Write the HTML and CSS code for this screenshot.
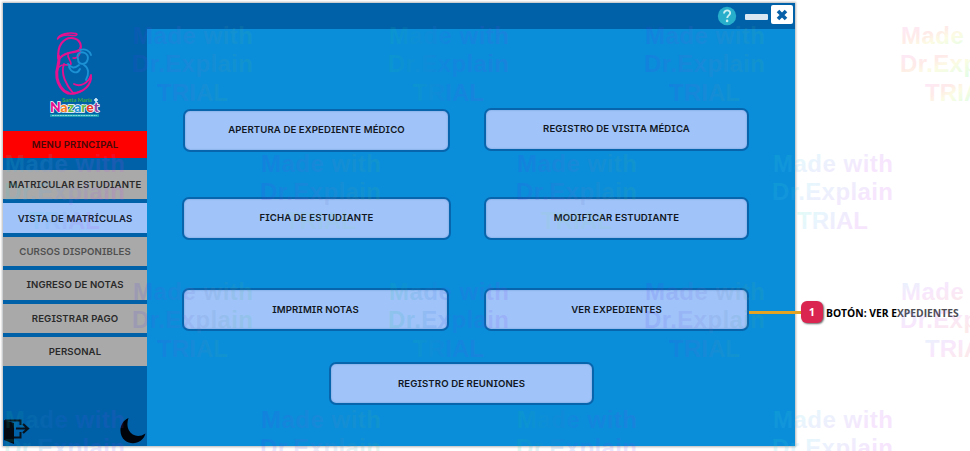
FILE: index.html
```html
<!DOCTYPE html>
<html lang="es">
<head>
<meta charset="utf-8">
<title>Menu principal</title>
<link rel="stylesheet" href="styles.css">
</head>
<body>
<div class="window">
  <header class="titlebar">
    <svg class="help" viewBox="0 0 20 20"><circle cx="10" cy="10" r="9.2" fill="#27aecb"/><path d="M7 7.6c0-4.4 6.6-4 6.1-.3-.3 2-2.9 2.3-2.9 4.8" fill="none" stroke="#c9f0f2" stroke-width="1.9"/><circle cx="10.1" cy="14.9" r="1.3" fill="#c9f0f2"/></svg>
    <span class="minimize"></span>
    <span class="close"><svg viewBox="0 0 12 12"><path d="M2 2l8 8M10 2l-8 8" stroke="#0861a8" stroke-width="3.6"/></svg></span>
  </header>
  <aside class="sidebar">
    <svg class="logo" viewBox="0 0 70 100">
      <g fill="none" stroke="#e5118f" stroke-linecap="round" stroke-linejoin="round">
        <path d="M17.500 14C19 9 29 7 36 8.500C38 9 37 11 32 10.500C26 9 20 11 17.500 14" stroke-width="1.500"/>
        <path d="M18.500 33C17 20 24 13 31 13C38 13 42 18 40.500 24C37 29 27 25 20 33" stroke-width="2.200"/>
        <path d="M40 23C41.500 28 38 34 33 33M28 28C27 34 31 35 31 39C29 42 23 37 19 42" stroke-width="1.600"/>
        <path d="M18.500 31C21 39 15 42 17 53C18 59 22 66 28 68" stroke-width="3"/>
        <path d="M24 39C20 49 27 61 33 68C43 68 52 60 51 50C48 59 40 62 34 59" stroke-width="1.900"/>
        <path d="M28 68C33 70 37 68 41 66" stroke-width="1.900"/>
      </g>
      <g fill="none" stroke="#1c91d4" stroke-width="1.900" stroke-linecap="round">
        <path d="M40 25C45 23 50 26 51 30M38 34C36 28 41 26 45 28C50 31 48 38 43 39C39 39 38 36 38 34"/>
        <path d="M28 39C32 43 34 44 39 40M29 42C31 47 37 50 40 44M44 40C49 43 49 49 46 55"/>
      </g>
      <text class="logo-top" x="22" y="77" textLength="30" lengthAdjust="spacingAndGlyphs">Santa María</text>
      <text class="logo-name" x="10" y="87" textLength="49" lengthAdjust="spacingAndGlyphs"><tspan fill="#e5118f">N</tspan><tspan fill="#f47b20">a</tspan><tspan fill="#62b946">z</tspan><tspan fill="#1c91d4">a</tspan><tspan fill="#62b946">r</tspan><tspan fill="#e5372e">e</tspan><tspan fill="#8b3fa0">t</tspan></text>
      <rect x="10" y="89.300" width="49" height="2.500" fill="#1fa9b9"/>
      <path d="M12 90.500h45" stroke="#9bdde0" stroke-width=".9" stroke-dasharray="2 .6"/>
      <path d="M54 75h4M56 73v4" stroke="#d6eefa" stroke-width="1.600"/>
    </svg>
    <nav class="menu">
      <a class="item title"><span>MENU PRINCIPAL</span></a>
      <a class="item"><span>MATRICULAR ESTUDIANTE</span></a>
      <a class="item active"><span>VISTA DE MATRÍCULAS</span></a>
      <a class="item faded"><span>CURSOS DISPONIBLES</span></a>
      <a class="item"><span>INGRESO DE NOTAS</span></a>
      <a class="item"><span>REGISTRAR PAGO</span></a>
      <a class="item"><span>PERSONAL</span></a>
    </nav>
    <div class="tools">
      <svg class="exit" viewBox="0 0 28 28"><path d="M1 3L11 6V27L1 23Z" fill="#030a12"/><path d="M2 3.500H17.500V8M17.500 15V20.500H11" fill="none" stroke="#07131e" stroke-width="2"/><path d="M13 11.500H24M20 7l5 4.500-5 4.500" fill="none" stroke="#07131e" stroke-width="2.200"/></svg>
      <svg class="moon" viewBox="0 0 26 26"><path d="M8.500 0C-1 4-2 17 5 22.500C12 28 23 25 25.500 15.500C19 20 12 18 9 12.500C7 9 7 4 8.500 0Z" fill="#000309"/></svg>
    </div>
  </aside>
  <main class="panel">
    <div class="row first"><button class="tile wide up"><span>APERTURA DE EXPEDIENTE MÉDICO</span></button><button class="tile raised up"><span>REGISTRO DE VISITA MÉDICA</span></button></div>
    <div class="row second"><button class="tile widest up"><span>FICHA DE ESTUDIANTE</span></button><button class="tile up"><span>MODIFICAR ESTUDIANTE</span></button></div>
    <div class="row third"><button class="tile wide"><span>IMPRIMIR NOTAS</span></button><button class="tile"><span>VER EXPEDIENTES</span></button></div>
    <div class="row last"><button class="tile"><span>REGISTRO DE REUNIONES</span></button></div>
  </main>
</div>
<div class="callout"><span class="leader"></span><span class="number">1</span><span class="label">BOTÓN: VER E<span class="dim">XPEDIENTES</span></span></div>
<svg class="watermarks" viewBox="0 0 970 451">
  <defs>
    <linearGradient id="violet"><stop offset="0" stop-color="#4838f0"/><stop offset=".45" stop-color="#7068d0"/><stop offset="1" stop-color="#40c080"/></linearGradient>
    <linearGradient id="green"><stop offset="0" stop-color="#10c890"/><stop offset=".5" stop-color="#4058f0"/><stop offset="1" stop-color="#8040f0"/></linearGradient>
    <linearGradient id="pink" gradientTransform="rotate(35)"><stop offset="0" stop-color="#f050f0"/><stop offset=".45" stop-color="#ff6a50"/><stop offset=".65" stop-color="#e8e830"/><stop offset="1" stop-color="#40f040"/></linearGradient>
    <linearGradient id="mint" gradientTransform="rotate(20)"><stop offset="0" stop-color="#20e8b0"/><stop offset=".4" stop-color="#50c0f0"/><stop offset="1" stop-color="#c040f0"/></linearGradient>
    <linearGradient id="blue" gradientTransform="rotate(35)"><stop offset="0" stop-color="#40b0f0"/><stop offset=".5" stop-color="#d050f0"/><stop offset="1" stop-color="#f06060"/></linearGradient>
  </defs>
  <g class="mark" fill="url(#violet)" transform="translate(128 0)"><text x="5" y="43.500" textLength="120">Made with</text><text x="4" y="71.500" textLength="121">Dr.Explain</text><text x="29" y="100.500" textLength="71">TRIAL</text></g>
  <g class="mark" fill="url(#green)" transform="translate(384 0)"><text x="5" y="43.500" textLength="120">Made with</text><text x="4" y="71.500" textLength="121">Dr.Explain</text><text x="29" y="100.500" textLength="71">TRIAL</text></g>
  <g class="mark" fill="url(#violet)" transform="translate(640 0)"><text x="5" y="43.500" textLength="120">Made with</text><text x="4" y="71.500" textLength="121">Dr.Explain</text><text x="29" y="100.500" textLength="71">TRIAL</text></g>
  <g class="mark" fill="url(#pink)" transform="translate(896 0)"><text x="5" y="43.500" textLength="120">Made with</text><text x="4" y="71.500" textLength="121">Dr.Explain</text><text x="29" y="100.500" textLength="71">TRIAL</text></g>
  <g class="mark" fill="url(#mint)" transform="translate(0 128)"><text x="5" y="43.500" textLength="120">Made with</text><text x="4" y="71.500" textLength="121">Dr.Explain</text><text x="29" y="100.500" textLength="71">TRIAL</text></g>
  <g class="mark" fill="url(#violet)" transform="translate(256 128)"><text x="5" y="43.500" textLength="120">Made with</text><text x="4" y="71.500" textLength="121">Dr.Explain</text><text x="29" y="100.500" textLength="71" fill="#90d8a0">TRIAL</text></g>
  <g class="mark" fill="url(#violet)" transform="translate(512 128)"><text x="5" y="43.500" textLength="120">Made with</text><text x="4" y="71.500" textLength="121">Dr.Explain</text><text x="29" y="100.500" textLength="71" fill="#90d8a0">TRIAL</text></g>
  <g class="mark" fill="url(#mint)" transform="translate(768 128)"><text x="5" y="43.500" textLength="120">Made with</text><text x="4" y="71.500" textLength="121">Dr.Explain</text><text x="29" y="100.500" textLength="71">TRIAL</text></g>
  <g class="mark" fill="url(#violet)" transform="translate(128 256)"><text x="5" y="43.500" textLength="120">Made with</text><text x="4" y="71.500" textLength="121">Dr.Explain</text><text x="29" y="100.500" textLength="71">TRIAL</text></g>
  <g class="mark" fill="url(#green)" transform="translate(384 256)"><text x="5" y="43.500" textLength="120">Made with</text><text x="4" y="71.500" textLength="121">Dr.Explain</text><text x="29" y="100.500" textLength="71">TRIAL</text></g>
  <g class="mark" fill="url(#violet)" transform="translate(640 256)"><text x="5" y="43.500" textLength="120">Made with</text><text x="4" y="71.500" textLength="121">Dr.Explain</text><text x="29" y="100.500" textLength="71">TRIAL</text></g>
  <g class="mark" fill="url(#blue)" transform="translate(896 256)"><text x="5" y="43.500" textLength="120">Made with</text><text x="4" y="71.500" textLength="121">Dr.Explain</text><text x="29" y="100.500" textLength="71">TRIAL</text></g>
  <g class="mark" fill="url(#green)" transform="translate(0 384)"><text x="5" y="43.500" textLength="120">Made with</text><text x="4" y="71.500" textLength="121">Dr.Explain</text></g>
  <g class="mark" fill="url(#violet)" transform="translate(256 384)"><text x="5" y="43.500" textLength="120">Made with</text><text x="4" y="71.500" textLength="121">Dr.Explain</text></g>
  <g class="mark" fill="url(#green)" transform="translate(512 384)"><text x="5" y="43.500" textLength="120">Made with</text><text x="4" y="71.500" textLength="121">Dr.Explain</text></g>
  <g class="mark" fill="url(#mint)" transform="translate(768 384)"><text x="5" y="43.500" textLength="120">Made with</text><text x="4" y="71.500" textLength="121">Dr.Explain</text></g>
</svg>
</body>
</html>
```
FILE: styles.css
```css
* { box-sizing: border-box; }
body {
  margin: 0;
  width: 970px;
  height: 451px;
  overflow: hidden;
  background: #fff;
  display: flex;
  font-family: Inter, "Liberation Sans", sans-serif;
}
.window {
  flex: none;
  width: 792px;
  height: 443px;
  margin: 3px 0 0 3px;
  display: grid;
  grid-template: 26px 417px / 144px 648px;
  background: #0a8eda;
  box-shadow: 0 0 2px 1px rgba(70, 75, 80, .4);
}
.titlebar {
  grid-column: 1 / 3;
  background: #0061a9;
  display: flex;
  justify-content: flex-end;
  align-items: flex-start;
  padding: 2px 2px 0 0;
}
.help { width: 20px; height: 20px; margin: 1px 8px 0 0; }
.minimize { width: 23px; height: 6px; margin: 9px 3px 0 0; border-radius: 1px; background: #d9e7f2; }
.close { width: 22px; height: 19px; border-radius: 2px; background: #fff; display: flex; align-items: center; justify-content: center; }
.close svg { width: 12px; height: 12px; }
.sidebar { background: #0061a9; display: flex; flex-direction: column; }
.logo { width: 70px; height: 100px; margin: -4px 0 6px 37px; flex: none; }
.logo-top { font: bold 6px Lato, sans-serif; fill: #3aa83d; }
.logo-name { font: 900 13px Lato, sans-serif; stroke: #fff; stroke-width: 1.4px; paint-order: stroke; }
.menu { display: flex; flex-direction: column; gap: 4px; }
.item {
  height: 29.400px;
  display: flex;
  align-items: center;
  justify-content: center;
  background: #a9a9a9;
  color: #292929;
  font-size: 9.600px;
  font-weight: 600;
  letter-spacing: .12px;
  white-space: nowrap;
  font-feature-settings: "cv08";
}
.item.title { height: 27px; margin-bottom: 8px; background: #f00; color: #4a0808; }
.item.active { background: #a0c4fa; color: #17202e; }
.item.faded { color: #505050; }
.tools { display: flex; justify-content: space-between; padding: 50px 1px 0 0; }
.exit { width: 28px; height: 28px; margin-top: 1px; }
.moon { width: 26px; height: 26px; margin-top: 2px; }
.panel { display: flex; flex-direction: column; }
.row { display: flex; }
.tile {
  width: 265px;
  height: 43px;
  border: 2px solid #0765ad;
  border-radius: 7px;
  padding: 0;
  background: #a0c4fa;
  color: #111722;
  font: 600 9.600px Inter, "Liberation Sans", sans-serif;
  letter-spacing: .1px;
  white-space: nowrap;
  font-feature-settings: "cv08";
  box-shadow: inset 0 0 2px rgba(40, 90, 160, .45);
}
.tile.up { padding-bottom: 3px; }
.tile.wide { width: 267px; }
.tile.widest { width: 269px; }
.first { margin: 80px 0 0 36px; gap: 34px; }
.raised { margin-top: -1px; }
.second { margin: 45px 0 0 35px; gap: 33px; }
.third { margin: 48px 0 0 35px; gap: 35px; }
.last { margin: 31px 0 0 182px; }
.callout { display: flex; align-items: flex-start; margin-top: 301px; position: relative; margin-left: 6px; }
.leader { position: absolute; left: -52px; top: 10px; width: 53px; height: 3px; background: #e5a323; }
.number {
  width: 22px;
  height: 22px;
  position: relative;
  border-radius: 6px;
  background: #da2550;
  color: #fff;
  font: bold 11px/22px "Open Sans", sans-serif;
  text-align: center;
  box-shadow: 1px 1px 2px rgba(0, 0, 0, .6);
}
.label { margin-left: 3px; font: bold 10.300px/24px "Open Sans", sans-serif; white-space: nowrap; color: #000; }
.dim { color: #4c4c52; }
.watermarks { position: absolute; left: 0; top: 0; width: 970px; height: 451px; pointer-events: none; }
.mark { font: bold 24px "Liberation Sans", Arial, sans-serif; opacity: .13; }
```
